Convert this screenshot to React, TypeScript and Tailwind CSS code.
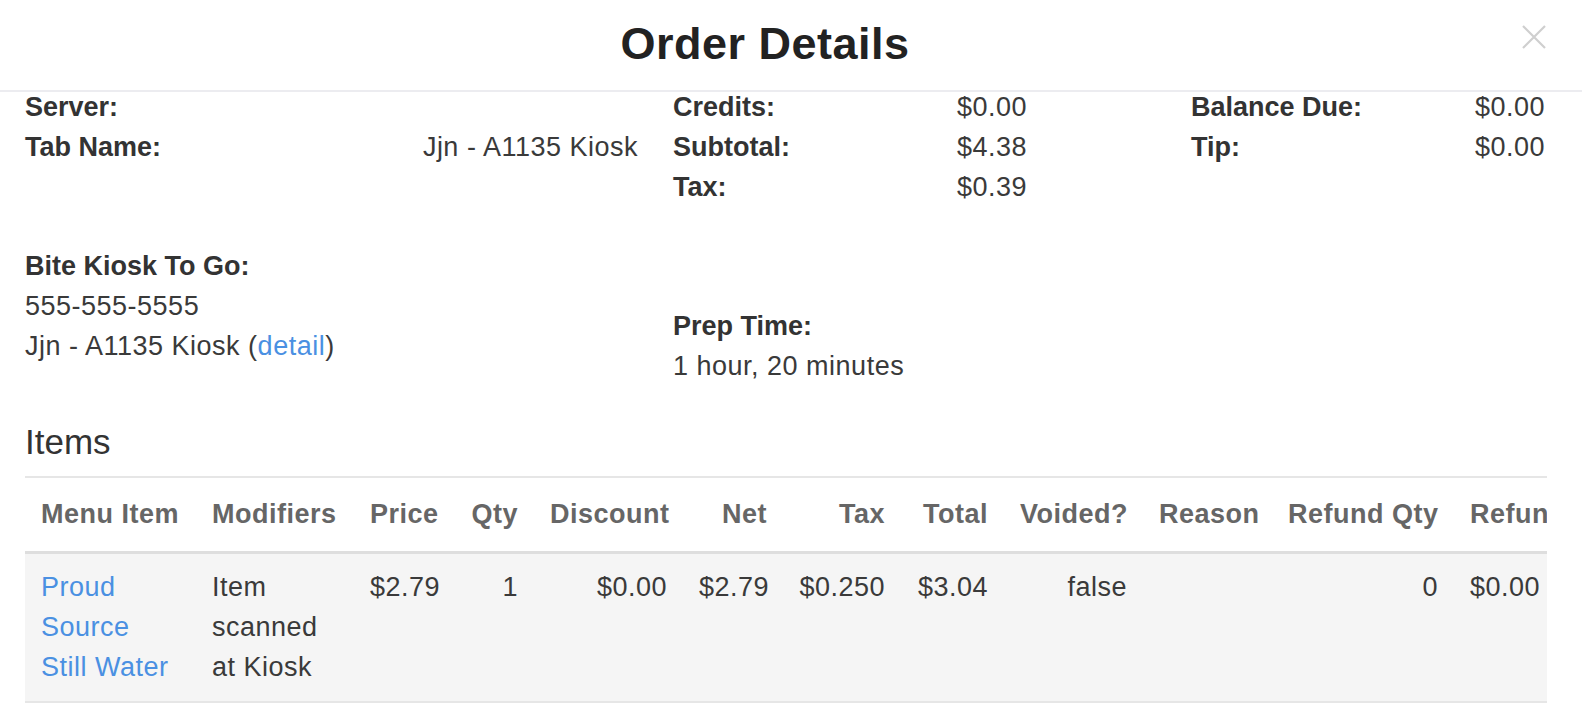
import React from "react";

const font = { fontFamily: '"Liberation Sans", Arial, sans-serif' };

type Col = { label: string; w: number; align: "left" | "right" };

const cols: Col[] = [
  { label: "Menu Item", w: 171, align: "left" },
  { label: "Modifiers", w: 158, align: "left" },
  { label: "Price", w: 100, align: "right" },
  { label: "Qty", w: 80, align: "right" },
  { label: "Discount", w: 149, align: "right" },
  { label: "Net", w: 100, align: "right" },
  { label: "Tax", w: 118, align: "right" },
  { label: "Total", w: 103, align: "right" },
  { label: "Voided?", w: 139, align: "right" },
  { label: "Reason", w: 129, align: "left" },
  { label: "Refund Qty", w: 182, align: "right" },
  { label: "Refund Amount", w: 220, align: "left" },
];

function Row({ label, value }: { label: string; value?: string }) {
  return (
    <div className="flex justify-between leading-[30px]">
      <span className="font-bold text-[#333]">{label}</span>
      <span className="text-[#3a3a3a] tracking-[0.5px]">{value ?? ""}</span>
    </div>
  );
}

export default function App() {
  const cells: React.ReactNode[] = [
    <a className="text-[#4a90e2]" href="#">
      <span className="block">Proud</span>
      <span className="block">Source</span>
      <span className="block">Still Water</span>
    </a>,
    <>
      <span className="block">Item</span>
      <span className="block">scanned</span>
      <span className="block">at Kiosk</span>
    </>,
    "$2.79",
    "1",
    "$0.00",
    "$2.79",
    "$0.250",
    "$3.04",
    "false",
    "",
    "0",
    "$0.00",
  ];

  return (
    <div className="relative w-[1582px] min-h-[720px] bg-white text-[27px] text-[#333]" style={font}>
      {/* Header */}
      <div className="relative h-[92px] border-b-2 border-[#ececf0] pr-[52px] flex items-center justify-center">
        <h1 className="text-[45px] font-bold text-[#222] tracking-[0.5px] pb-[2px]">Order Details</h1>
        <button className="absolute right-[36px] top-[25px] w-[24px] h-[24px] text-[#cfcfcf]" aria-label="close">
          <svg viewBox="0 0 24 24" width="24" height="24" fill="none" stroke="currentColor" strokeWidth="2.2">
            <path d="M1 1 L23 23 M23 1 L1 23" />
          </svg>
        </button>
      </div>

      {/* Info */}
      <div className="pl-[25px] pr-[37px]">
        <div className="flex">
          <div className="w-[613px] flex flex-col gap-[10px]">
            <Row label="Server:" />
            <Row label="Tab Name:" value="Jjn - A1135 Kiosk" />
          </div>
          <div className="ml-[35px] w-[354px] flex flex-col gap-[10px]">
            <Row label="Credits:" value="$0.00" />
            <Row label="Subtotal:" value="$4.38" />
            <Row label="Tax:" value="$0.39" />
          </div>
          <div className="ml-[164px] w-[354px] flex flex-col gap-[10px]">
            <Row label="Balance Due:" value="$0.00" />
            <Row label="Tip:" value="$0.00" />
          </div>
        </div>

        <div className="flex mt-[49px]">
          <div className="w-[613px] flex flex-col gap-[10px] leading-[30px]">
            <span className="font-bold">Bite Kiosk To Go:</span>
            <span className="text-[#3a3a3a] tracking-[0.5px]">555-555-5555</span>
            <span className="text-[#3a3a3a] tracking-[0.5px]">
              Jjn - A1135 Kiosk (<a href="#" className="text-[#4a90e2]">detail</a>)
            </span>
          </div>
          <div className="ml-[35px] w-[354px] flex flex-col gap-[10px] leading-[30px] pt-[60px]">
            <span className="font-bold">Prep Time:</span>
            <span className="text-[#3a3a3a] tracking-[0.5px]">1 hour, 20 minutes</span>
          </div>
        </div>

        {/* Items */}
        <h2 className="mt-[41px] text-[35px] leading-[40px] text-[#333] pb-[14px] border-b-2 border-[#e6e6e6] mr-[-2px]">Items</h2>

        <div className="w-[1522px] overflow-hidden">
          <table className="table-fixed border-collapse" style={{ width: cols.reduce((a, c) => a + c.w, 0) }}>
            <colgroup>
              {cols.map((c) => (
                <col key={c.label} style={{ width: c.w }} />
              ))}
            </colgroup>
            <thead>
              <tr className="border-b-[3px] border-[#dedede]">
                {cols.map((c) => (
                  <th
                    key={c.label}
                    className={`px-4 h-[74px] font-bold text-[#666] whitespace-nowrap leading-[30px] tracking-[0.5px] ${c.align === "right" ? "text-right" : "text-left"}`}
                  >
                    {c.label}
                  </th>
                ))}
              </tr>
            </thead>
            <tbody>
              <tr className="bg-[#f5f5f5] border-b-2 border-[#e6e6e6]">
                {cols.map((c, i) => (
                  <td
                    key={c.label}
                    className={`px-4 pt-[13px] pb-[14px] align-top leading-[40px] text-[#3a3a3a] whitespace-nowrap tracking-[0.5px] ${c.align === "right" ? "text-right" : "text-left"}`}
                  >
                    {cells[i]}
                  </td>
                ))}
              </tr>
            </tbody>
          </table>
        </div>
      </div>
    </div>
  );
}
